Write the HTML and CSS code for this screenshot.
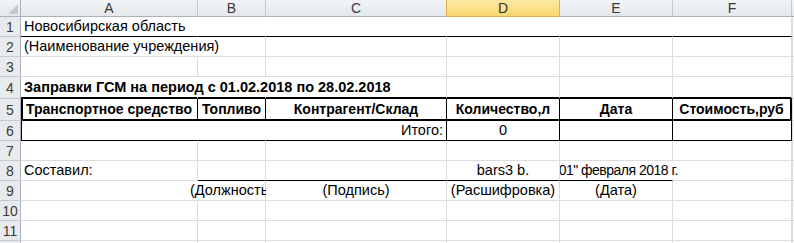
FILE: index.html
```html
<!DOCTYPE html>
<html lang="ru">
<head>
<meta charset="utf-8">
<title>Заправки ГСМ</title>
<link rel="stylesheet" href="styles.css">
</head>
<body>
<div class="sheet">
  <div class="row hdr">
    <div class="corner"><svg width="10" height="10" viewBox="0 0 10 10"><polygon points="10,0 10,10 0,10" fill="#c6cbd1"/></svg></div>
    <div class="ch">A</div>
    <div class="ch">B</div>
    <div class="ch pre">C</div>
    <div class="ch sel">D</div>
    <div class="ch">E</div>
    <div class="ch">F</div>
    <div class="ch rest"></div>
  </div>

  <div class="row r1">
    <div class="rh">1</div>
    <div class="c nr">Новосибирская область</div>
    <div class="c nr"></div>
    <div class="c nr"></div>
    <div class="c nr"></div>
    <div class="c nr"></div>
    <div class="c"></div>
    <div class="c rest"></div>
  </div>

  <div class="row">
    <div class="rh">2</div>
    <div class="c nr">(Наименование учреждения)</div>
    <div class="c"></div>
    <div class="c"></div>
    <div class="c"></div>
    <div class="c"></div>
    <div class="c"></div>
    <div class="c rest"></div>
  </div>

  <div class="row">
    <div class="rh">3</div>
    <div class="c"></div>
    <div class="c"></div>
    <div class="c"></div>
    <div class="c"></div>
    <div class="c"></div>
    <div class="c"></div>
    <div class="c rest"></div>
  </div>

  <div class="row tall r4">
    <div class="rh">4</div>
    <div class="c nr b">Заправки ГСМ на период с 01.02.2018 по 28.02.2018</div>
    <div class="c nr"></div>
    <div class="c"></div>
    <div class="c"></div>
    <div class="c"></div>
    <div class="c"></div>
    <div class="c rest"></div>
  </div>

  <div class="row tall r5">
    <div class="rh">5</div>
    <div class="c b ctr first">Транспортное средство</div>
    <div class="c b ctr">Топливо</div>
    <div class="c b ctr">Контрагент/Склад</div>
    <div class="c b ctr">Количество,л</div>
    <div class="c b ctr">Дата</div>
    <div class="c b ctr last">Стоимость,руб</div>
    <div class="c rest"></div>
  </div>

  <div class="row r6">
    <div class="rh">6</div>
    <div class="c nr first"></div>
    <div class="c nr"></div>
    <div class="c right">Итого:</div>
    <div class="c ctr">0</div>
    <div class="c"></div>
    <div class="c"></div>
    <div class="c rest"></div>
  </div>

  <div class="row">
    <div class="rh">7</div>
    <div class="c"></div>
    <div class="c"></div>
    <div class="c"></div>
    <div class="c"></div>
    <div class="c"></div>
    <div class="c"></div>
    <div class="c rest"></div>
  </div>

  <div class="row r8">
    <div class="rh">8</div>
    <div class="c">Составил:</div>
    <div class="c line"></div>
    <div class="c line"></div>
    <div class="c line ctr">bars3 b.</div>
    <div class="c line ctr nr clipl date">"01" февраля 2018 г.</div>
    <div class="c"></div>
    <div class="c rest"></div>
  </div>

  <div class="row">
    <div class="rh">9</div>
    <div class="c nr"></div>
    <div class="c ctr clipr">(Должность)</div>
    <div class="c ctr">(Подпись)</div>
    <div class="c ctr">(Расшифровка)</div>
    <div class="c ctr">(Дата)</div>
    <div class="c"></div>
    <div class="c rest"></div>
  </div>

  <div class="row">
    <div class="rh">10</div>
    <div class="c"></div>
    <div class="c"></div>
    <div class="c"></div>
    <div class="c"></div>
    <div class="c"></div>
    <div class="c"></div>
    <div class="c rest"></div>
  </div>

  <div class="row">
    <div class="rh">11</div>
    <div class="c"></div>
    <div class="c"></div>
    <div class="c"></div>
    <div class="c"></div>
    <div class="c"></div>
    <div class="c"></div>
    <div class="c rest"></div>
  </div>

  <div class="row">
    <div class="rh"></div>
    <div class="c"></div>
    <div class="c"></div>
    <div class="c"></div>
    <div class="c"></div>
    <div class="c"></div>
    <div class="c"></div>
    <div class="c rest"></div>
  </div>
</div>
</body>
</html>
```

FILE: styles.css
```css
:root {
  --grid: #dadcdd;
  --hdr-line: #c5cad0;
  --hdr-edge: #aab2bb;
}

* {
  box-sizing: border-box;
}

html,
body {
  margin: 0;
  background: #fff;
}

body {
  font-family: "Liberation Sans", Arial, sans-serif;
  font-size: 14px;
  color: #000;
}

.sheet {
  width: 794px;
  height: 243px;
  overflow: hidden;
}

.row {
  display: grid;
  grid-template-columns: 21px 177px 68px 181px 113px 113px 119px 1fr;
  height: 20px;
}

.row.hdr {
  height: 17px;
}

.row.tall {
  height: 22px;
}

/* column headers */
.corner,
.ch {
  background: linear-gradient(#f2f4f6, #e4e7eb);
  border-right: 1px solid var(--hdr-line);
  border-bottom: 1px solid var(--hdr-edge);
}

.corner {
  display: flex;
  align-items: flex-end;
  justify-content: flex-end;
  padding: 0 2px 2px 0;
  border-right-color: var(--hdr-edge);
}

.ch {
  display: flex;
  align-items: center;
  justify-content: center;
  color: #3a3a3a;
  font-size: 14px;
  line-height: 16px;
}

.ch.pre {
  border-right-color: #e0ae52;
}

.ch.sel {
  background: linear-gradient(#fde9a4, #f9d672);
  border-right-color: #e0ae52;
  border-bottom-color: #e0ae52;
  color: #333;
}

.ch.rest {
  border-right: none;
}

/* row headers */
.rh {
  background: #e8ebee;
  border-right: 1px solid var(--hdr-edge);
  border-bottom: 1px solid var(--hdr-line);
  display: flex;
  align-items: center;
  justify-content: center;
  color: #3a3a3a;
  font-size: 14px;
  line-height: 16px;
}

/* body cells */
.c {
  border-right: 1px solid var(--grid);
  border-bottom: 1px solid var(--grid);
  display: flex;
  align-items: flex-end;
  padding: 0 3px 2px;
  font-size: 14.5px;
  line-height: 16px;
  white-space: nowrap;
  min-width: 0;
}

.c.rest {
  border-right: none;
  border-left: 1px solid var(--grid);
}

.c.nr {
  border-right-color: transparent;
}

.b {
  font-weight: bold;
}

.ctr {
  justify-content: center;
}

.right {
  justify-content: flex-end;
}

.clipl {
  clip-path: inset(0 -300px 0 0);
}

.clipr {
  clip-path: inset(0 0 0 -300px);
}

.date {
  font-size: 14px;
  letter-spacing: -0.5px;
}

/* row 1: black rule under the heading */
.r1 .c:not(.rest) {
  border-bottom-color: #000;
}

/* row 4: thick rule above table */
.r4 .c:not(.rest) {
  border-bottom: 2px solid #000;
}

/* row 5: table header */
.r5 .c:not(.rest) {
  font-size: 14px;
  border-right-color: #000;
  border-bottom: 2px solid #000;
}

.r5 .c.first {
  box-shadow: inset 2px 0 0 #000;
}

.r5 .c.last {
  border-right-width: 2px;
}

/* row 6: totals */
.r6 .c:not(.rest) {
  border-bottom-color: #000;
}

.r6 .c:not(.rest):not(.nr) {
  border-right-color: #000;
}

.r6 .c.first {
  box-shadow: inset 1px 0 0 #000;
}

/* row 8: signature rule */
.r8 .c.line {
  border-bottom-color: #000;
}
```
